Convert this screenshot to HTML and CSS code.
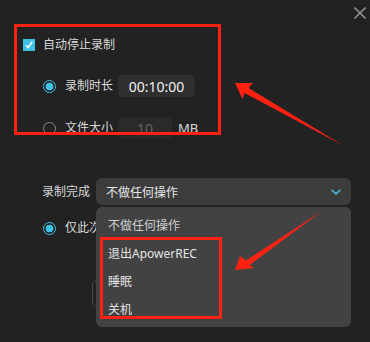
FILE: index.html
```html
<!DOCTYPE html>
<html lang="zh-CN">
<head>
<meta charset="utf-8">
<title>录制设置</title>
<link rel="stylesheet" href="styles.css">
</head>
<body>
<div class="window">
  <div class="titlebar">
    <svg class="close" width="12" height="12" viewBox="0 0 12 12"><path d="M0.5 0.5 L11.5 11.5 M11.5 0.5 L0.5 11.5" stroke="#8a8a8a" stroke-width="1.6" fill="none"/></svg>
  </div>
  <div class="content">
    <div class="check-row">
      <span class="checkbox"><svg width="12" height="12" viewBox="0 0 12 12"><path d="M3 6.2 L5.2 8.6 L9.2 2.8" stroke="#fff" stroke-width="1.5" fill="none"/></svg></span>
      <span class="label">自动停止录制</span>
    </div>
    <div class="options">
      <div class="radio-row">
        <span class="radio on"></span>
        <span class="label">录制时长</span>
        <span class="field">00:10:00</span>
      </div>
      <div class="radio-row">
        <span class="radio"></span>
        <span class="label">文件大小</span>
        <span class="field small disabled">10</span>
        <span class="unit">MB</span>
      </div>
    </div>
    <div class="finish-row">
      <span class="label wide">录制完成</span>
      <div class="select">
        <span>不做任何操作</span>
        <svg width="10" height="6" viewBox="0 0 10 6"><path d="M0.7 0.7 L5 5 L9.3 0.7" stroke="#3ec3e6" stroke-width="1.5" fill="none"/></svg>
      </div>
    </div>
    <div class="radio-row only">
      <span class="radio on"></span>
      <span class="label">仅此次</span>
    </div>
    <div class="ghost-btn"></div>
  </div>

  <ul class="menu">
    <li class="muted">不做任何操作</li>
    <li>退出ApowerREC</li>
    <li>睡眠</li>
    <li>关机</li>
  </ul>

  <div class="mark mark-1"></div>
  <div class="mark mark-2"></div>
  <svg class="arrows" width="370" height="342" viewBox="0 0 370 342">
    <polygon points="235,83 253,83 248.5,88 344,146 244.5,93 242.5,99" fill="#ff2213"/>
    <polygon points="235,270 240,256 246,260.5 322,211 249.5,265 254,268" fill="#ff2213"/>
  </svg>
</div>
</body>
</html>
```

FILE: styles.css
```css
* { box-sizing: border-box; }
html, body {
  margin: 0;
  padding: 0;
  background: #222222;
}
body {
  font-family: "Noto Sans", "Noto Sans CJK SC", sans-serif;
  color: #d9d9d9;
  font-size: 12px;
}
.window {
  position: relative;
  width: 370px;
  height: 342px;
  overflow: hidden;
  background: #222222;
}
.titlebar {
  height: 39px;
  display: flex;
  justify-content: flex-end;
  align-items: flex-start;
  padding: 7px 4px 0 0;
}
.close { display: block; }
.content {
  padding-left: 23px;
}
.check-row {
  display: flex;
  align-items: center;
  height: 12px;
  gap: 8px;
}
.checkbox {
  width: 12px;
  height: 12px;
  background: #3ec3e6;
  display: block;
}
.checkbox svg { display: block; }
.label {
  line-height: 16px;
  white-space: nowrap;
}
.options {
  margin-top: 24px;
  margin-left: 20px;
  display: flex;
  flex-direction: column;
  gap: 20px;
}
.radio-row {
  display: flex;
  align-items: center;
  height: 22px;
}
.radio {
  width: 13px;
  height: 13px;
  border-radius: 50%;
  border: 1.5px solid #8a8a8a;
  margin-right: 9px;
  flex: none;
}
.radio.on {
  border-color: #3ec3e6;
  background: radial-gradient(circle, #3ec3e6 0 3.6px, transparent 4.2px);
}
.field {
  margin-left: 5px;
  width: 77px;
  height: 22px;
  border-radius: 5px;
  background: #2f2f2f;
  color: #f0f0f0;
  font-size: 14px;
  display: flex;
  align-items: center;
  justify-content: center;
}
.field.small { width: 54px; }
.field.disabled {
  background: #2a2a2a;
  color: #666;
}
.unit {
  margin-left: 6px;
  font-size: 13px;
  color: #d9d9d9;
}
.finish-row {
  margin-top: 39px;
  margin-left: 19px;
  display: flex;
  align-items: center;
}
.label.wide { width: 54px; }
.select {
  width: 255px;
  height: 27px;
  border-radius: 6px;
  background: #3c3c3c;
  display: flex;
  align-items: center;
  justify-content: space-between;
  padding: 0 10px 0 10px;
  color: #e6e6e6;
}
.select svg { display: block; }
.radio-row.only {
  margin-top: 12px;
  margin-left: 20px;
}
.ghost-btn {
  margin-top: 41px;
  margin-left: 69px;
  width: 100px;
  height: 27px;
  border: 1px solid #4a4a4a;
  border-radius: 5px;
}
.menu {
  position: absolute;
  left: 96px;
  top: 207px;
  width: 255px;
  height: 120px;
  margin: 0;
  padding: 5px 0 3px 12px;
  list-style: none;
  background: #424242;
  border-radius: 6px;
}
.menu li {
  height: 28px;
  line-height: 28px;
  color: #e4e4e4;
  white-space: nowrap;
}
.menu li.muted { color: #cfcfcf; }
.mark {
  position: absolute;
  border: 3px solid #ff2213;
}
.mark-1 {
  left: 14px;
  top: 24px;
  width: 207px;
  height: 111px;
}
.mark-2 {
  left: 100px;
  top: 237px;
  width: 122px;
  height: 82px;
}
.arrows {
  position: absolute;
  left: 0;
  top: 0;
  pointer-events: none;
}
```
